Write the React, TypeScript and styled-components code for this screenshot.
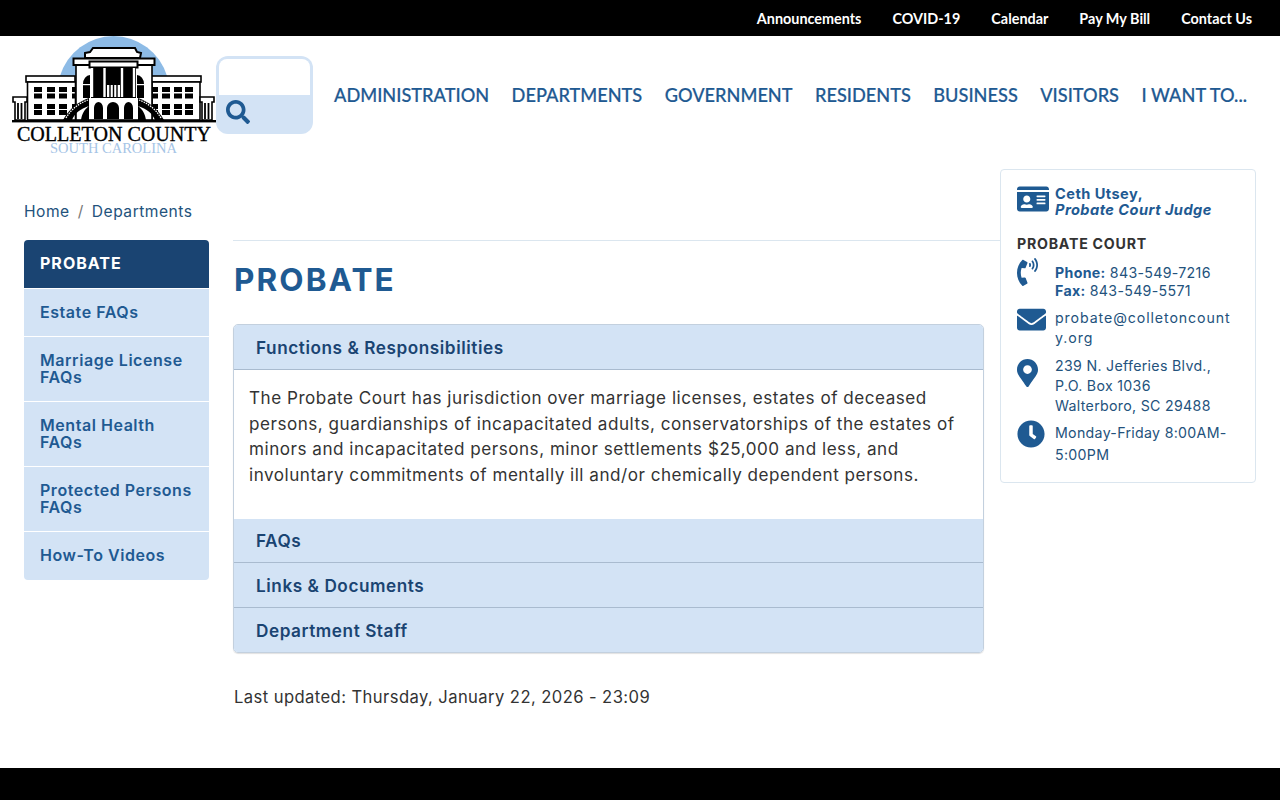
import React from 'react';
import styled, { createGlobalStyle } from 'styled-components';
import { FaClock, FaEnvelope, FaIdCard, FaMapMarkerAlt, FaPhoneVolume, FaSearch } from 'react-icons/fa';

const colors = {
  navy: '#1a4472',
  blue: '#1f5a92',
  link: '#23527c',
  pale: '#d3e3f5',
  text: '#333333',
  rule: '#dbe6ef',
};

const bodyFont = '"Inter", "Open Sans", sans-serif';
const navFont = '"Lato", "Open Sans", sans-serif';

const GlobalStyle = createGlobalStyle`
  html, body { margin: 0; padding: 0; background: #fff; }
  body { font-family: ${bodyFont}; color: ${colors.text}; }
  * { box-sizing: border-box; }
  a { color: inherit; text-decoration: none; }
`;

const Page = styled.div`
  display: flex;
  flex-direction: column;
  height: 800px;
  overflow: hidden;
`;

const TopBar = styled.div`
  display: flex;
  justify-content: flex-end;
  align-items: center;
  gap: 31px;
  height: 36px;
  padding-right: 28px;
  background: #000;
`;

const TopLink = styled.a`
  font-family: ${navFont};
  font-size: 14.4px;
  font-weight: 700;
  color: #fff;
`;

const Header = styled.header`
  display: flex;
  align-items: flex-start;
  height: 124px;
  padding-left: 12px;
`;

const Logo = styled.svg`
  display: block;
  flex: none;
  width: 204px;
  height: 120px;
`;

const SearchBox = styled.div`
  flex: none;
  width: 97px;
  height: 78px;
  margin-top: 20px;
  padding: 3px;
  background: ${colors.pale};
  border-radius: 12px;
  color: ${colors.blue};
  svg {
    display: block;
    width: 24px;
    height: 24px;
    margin: 5px 0 0 7px;
  }
`;

const SearchInput = styled.div`
  height: 36px;
  background: #fff;
  border-radius: 8px 8px 0 0;
`;

const Nav = styled.nav`
  display: flex;
  justify-content: space-between;
  width: 913px;
  margin: 48px 0 0 21px;
`;

const NavLink = styled.a`
  font-family: ${navFont};
  font-size: 18.2px;
  font-weight: 500;
  line-height: 23px;
  color: ${colors.blue};
  -webkit-text-stroke: 0.2px ${colors.blue};
  white-space: nowrap;
`;

const Main = styled.main`
  flex: 1;
  display: grid;
  grid-template-columns: 185px 767px 256px;
  column-gap: 24px;
  padding-left: 24px;
`;

const LeftColumn = styled.aside`
  padding-top: 43px;
`;

const Breadcrumb = styled.div`
  display: flex;
  gap: 8px;
  height: 37px;
  font-size: 15.6px;
  line-height: 18px;
  letter-spacing: 0.5px;
  color: ${colors.link};
  span { color: #777; }
`;

const SideMenu = styled.ul`
  margin: 0;
  padding: 0;
  list-style: none;
  border-radius: 4px;
  overflow: hidden;
`;

const SideItem = styled.li<{ $active?: boolean }>`
  padding: ${p => (p.$active ? '15.3px' : '14.6px')} 16px 16px;
  font-size: 16px;
  line-height: 16.7px;
  letter-spacing: ${p => (p.$active ? 1 : 0.55)}px;
  font-weight: ${p => (p.$active ? 700 : 600)};
  color: ${p => (p.$active ? '#fff' : colors.blue)};
  background: ${p => (p.$active ? colors.navy : colors.pale)};
  & + & { border-top: 1px solid #fff; }
`;

const Content = styled.section`
  padding-top: 80px;
`;

const TitleBlock = styled.div`
  width: 767px;
  border-top: 1px solid ${colors.rule};
`;

const Title = styled.h1`
  margin: 0;
  padding: 20px 0 0 1px;
  height: 83px;
  font-size: 31.5px;
  line-height: 38px;
  letter-spacing: 2.1px;
  font-weight: 700;
  color: ${colors.blue};
`;

const Accordion = styled.div`
  width: 751px;
  border: 1px solid #c3d0de;
  border-radius: 5px;
  overflow: hidden;
  box-shadow: 0 1px 1px rgba(0, 0, 0, 0.12);
`;

const AccordionHead = styled.div<{ $h: number }>`
  display: flex;
  align-items: center;
  height: ${p => p.$h}px;
  padding-left: 22px;
  font-size: 17.2px;
  letter-spacing: 0.55px;
  font-weight: 600;
  color: ${colors.navy};
  background: ${colors.pale};
  & + & { border-top: 1px solid #a9bbcf; }
`;

const AccordionBody = styled.div`
  height: 150px;
  padding: 15px 15px 0;
  border-top: 1px solid #a9bbcf;
  font-size: 17.1px;
  line-height: 25.7px;
  letter-spacing: 0.51px;
  color: ${colors.text};
`;

const Updated = styled.p`
  margin: 34px 0 0 1px;
  font-size: 16.6px;
  line-height: 20px;
  letter-spacing: 0.42px;
  color: ${colors.text};
`;

const InfoCard = styled.div`
  align-self: start;
  width: 256px;
  height: 314px;
  margin: 9px 0 0 -24px;
  padding: 16px 24px 0 16px;
  border: 1px solid ${colors.rule};
  border-radius: 4px;
  background: #fff;
  font-size: 14.2px;
  letter-spacing: 0.3px;
  color: ${colors.link};
`;

const InfoRow = styled.div<{ $top?: number }>`
  display: flex;
  margin-top: ${p => p.$top ?? 0}px;
`;

const IconSlot = styled.div<{ $w: number; $h: number; $shift?: number }>`
  flex: none;
  width: 38px;
  height: 0;
  margin-top: ${p => p.$shift ?? 0}px;
  color: ${colors.blue};
  svg {
    display: block;
    width: ${p => p.$w}px;
    height: ${p => p.$h}px;
  }
`;

const Person = styled.div`
  font-size: 14.6px;
  line-height: 16px;
  letter-spacing: 0.45px;
  font-weight: 700;
  color: ${colors.blue};
  em { display: block; }
`;

const CourtName = styled.div`
  margin-top: 17px;
  font-size: 14.2px;
  line-height: 17px;
  letter-spacing: 0.75px;
  font-weight: 700;
  color: ${colors.text};
`;

const Lines = styled.div<{ $lh: number; $pad?: number }>`
  min-width: 0;
  padding-top: ${p => p.$pad ?? 0}px;
  line-height: ${p => p.$lh}px;
  b { font-weight: 700; color: ${colors.blue}; }
`;

const EmailLines = styled(Lines)`
  letter-spacing: 0.9px;
  word-break: break-all;
`;

const Footer = styled.footer`
  flex: none;
  height: 32px;
  background: #000;
`;

const topLinks = ['Announcements', 'COVID-19', 'Calendar', 'Pay My Bill', 'Contact Us'];
const navLinks = ['ADMINISTRATION', 'DEPARTMENTS', 'GOVERNMENT', 'RESIDENTS', 'BUSINESS', 'VISITORS', 'I WANT TO...'];
const sideLinks = ['Estate FAQs', 'Marriage License FAQs', 'Mental Health FAQs', 'Protected Persons FAQs', 'How-To Videos'];

// two floors of paired window panes on one courthouse wing
const Windows: React.FC<{ xs: number[] }> = ({ xs }) => (
  <g fill="#000">
    {xs.map(x =>
      [87, 93.5, 104, 110].map(y => <rect key={`${x}-${y}`} x={x} y={y} width={8} height={5} />)
    )}
  </g>
);

const CountyLogo: React.FC = () => (
  <Logo viewBox="12 36 204 120">
    <path d="M60 76 A55.8 55.8 0 0 1 167 76 Z" fill="#8dbbe6" />
    {/* wings */}
    <rect x="26" y="76" width="49" height="6" fill="#fff" stroke="#000" strokeWidth="1.6" />
    <rect x="27.5" y="82" width="48" height="38" fill="#fff" stroke="#000" strokeWidth="1.6" />
    <rect x="150" y="76" width="51" height="6" fill="#fff" stroke="#000" strokeWidth="1.6" />
    <rect x="152" y="82" width="48" height="38" fill="#fff" stroke="#000" strokeWidth="1.6" />
    <Windows xs={[34, 47, 59, 72]} />
    <Windows xs={[150, 162, 174, 185]} />
    {/* end pavilions */}
    <path d="M13 97 H27 V102 H25 V120 H15 V102 H13 Z" fill="#fff" stroke="#000" strokeWidth="1.6" />
    <path d="M18 103 V119 M21.5 103 V119" stroke="#000" strokeWidth="1.8" />
    <path d="M214 97 H200 V102 H202 V120 H212 V102 H214 Z" fill="#fff" stroke="#000" strokeWidth="1.6" />
    <path d="M205 103 V119 M208.5 103 V119" stroke="#000" strokeWidth="1.8" />
    {/* roof and central block */}
    <path d="M85 53 L90 52 L93 48 L135 48 L137 52 L141 53 L140 58 L85 58 Z" fill="#fff" stroke="#000" strokeWidth="2" />
    <rect x="76" y="64" width="76" height="56" fill="#fff" stroke="#000" strokeWidth="1.6" />
    <rect x="73.5" y="58.5" width="81" height="6.5" fill="#fff" stroke="#000" strokeWidth="2" />
    {/* portico */}
    <rect x="89.5" y="61.5" width="48" height="6" fill="#fff" stroke="#000" strokeWidth="2" />
    <rect x="91" y="67" width="45" height="31" fill="#000" />
    <path d="M92 68 V97 M104.5 68 V97 M122 68 V97 M134 68 V97" stroke="#fff" strokeWidth="2.4" />
    <rect x="107" y="85" width="13" height="12" fill="#fff" />
    <path d="M110 85 V97 M113.5 85 V97 M117 85 V97" stroke="#000" strokeWidth="1.4" />
    <path d="M83 84 A7 9 0 0 1 90 75 V98 H83 Z M137 75 A7 9 0 0 1 144 84 V98 H137 Z" fill="#000" />
    <rect x="83" y="84" width="7" height="1.2" fill="#fff" />
    <rect x="137" y="84" width="7" height="1.2" fill="#fff" />
    {/* arches */}
    <path d="M94 119 V108 A4.5 6 0 0 1 103 108 V119 Z M107 119 V108 A6 6 0 0 1 119 108 V119 Z M124 119 V108 A4.5 6 0 0 1 133 108 V119 Z" fill="#000" />
    {/* stairs */}
    <path d="M63 120 C70 108 78 102 89 98 V120 H81 C82 114 84 110 89 106 C80 109 75 113 72 120 Z" fill="#000" />
    <path d="M66 118 C72 108 80 103 88 100" fill="none" stroke="#fff" strokeWidth="1.2" strokeDasharray="1.5 1" />
    <path d="M164 120 C157 108 149 102 138 98 V120 H146 C145 114 143 110 138 106 C147 109 152 113 155 120 Z" fill="#000" />
    <path d="M161 118 C155 108 147 103 139 100" fill="none" stroke="#fff" strokeWidth="1.2" strokeDasharray="1.5 1" />
    <rect x="12" y="120" width="204" height="2.4" fill="#000" />
    <text x="114" y="140.5" textAnchor="middle" fontFamily="'Liberation Serif', serif" fontSize="20.5" textLength="194" lengthAdjust="spacingAndGlyphs" fill="#000" stroke="#000" strokeWidth="0.35">COLLETON COUNTY</text>
    <text x="113.5" y="153" textAnchor="middle" fontFamily="'Liberation Serif', serif" fontSize="14.5" textLength="127" lengthAdjust="spacingAndGlyphs" fill="#a5c4e6">SOUTH CAROLINA</text>
  </Logo>
);

export default function App() {
  return (
    <Page>
      <GlobalStyle />
      <TopBar>
        {topLinks.map(l => (
          <TopLink key={l} href="#">{l}</TopLink>
        ))}
      </TopBar>
      <Header>
        <CountyLogo />
        <SearchBox>
          <SearchInput />
          <FaSearch />
        </SearchBox>
        <Nav>
          {navLinks.map(l => (
            <NavLink key={l} href="#">{l}</NavLink>
          ))}
        </Nav>
      </Header>
      <Main>
        <LeftColumn>
          <Breadcrumb>
            <a href="#">Home</a>
            <span>/</span>
            <a href="#">Departments</a>
          </Breadcrumb>
          <SideMenu>
            <SideItem $active>PROBATE</SideItem>
            {sideLinks.map(l => (
              <SideItem key={l}>{l}</SideItem>
            ))}
          </SideMenu>
        </LeftColumn>
        <Content>
          <TitleBlock>
            <Title>PROBATE</Title>
          </TitleBlock>
          <Accordion>
            <AccordionHead $h={44}>Functions &amp; Responsibilities</AccordionHead>
            <AccordionBody>
              The Probate Court has jurisdiction over marriage licenses, estates of deceased persons, guardianships of
              incapacitated adults, conservatorships of the estates of minors and incapacitated persons, minor
              settlements $25,000 and less, and involuntary commitments of mentally ill and/or chemically dependent
              persons.
            </AccordionBody>
            <AccordionHead $h={43}>FAQs</AccordionHead>
            <AccordionHead $h={45}>Links &amp; Documents</AccordionHead>
            <AccordionHead $h={45}>Department Staff</AccordionHead>
          </Accordion>
          <Updated>Last updated: Thursday, January 22, 2026 - 23:09</Updated>
        </Content>
        <InfoCard>
          <InfoRow>
            <IconSlot $w={32} $h={32} $shift={-3}><FaIdCard /></IconSlot>
            <Person>
              Ceth Utsey,
              <em>Probate Court Judge</em>
            </Person>
          </InfoRow>
          <CourtName>PROBATE COURT</CourtName>
          <InfoRow $top={3}>
            <IconSlot $w={21} $h={28} $shift={3}><FaPhoneVolume /></IconSlot>
            <Lines $lh={18} $pad={9}>
              <b>Phone:</b> 843-549-7216
              <br />
              <b>Fax:</b> 843-549-5571
            </Lines>
          </InfoRow>
          <InfoRow $top={8}>
            <IconSlot $w={29} $h={29} $shift={-3}><FaEnvelope /></IconSlot>
            <EmailLines $lh={20}>probate@colletoncounty.org</EmailLines>
          </InfoRow>
          <InfoRow $top={8}>
            <IconSlot $w={21} $h={28} $shift={3}><FaMapMarkerAlt /></IconSlot>
            <Lines $lh={20}>
              239 N. Jefferies Blvd.,
              <br />
              P.O. Box 1036
              <br />
              Walterboro, SC 29488
            </Lines>
          </InfoRow>
          <InfoRow $top={6}>
            <IconSlot $w={28} $h={28} $shift={-2}><FaClock /></IconSlot>
            <Lines $lh={22}>Monday-Friday 8:00AM-5:00PM</Lines>
          </InfoRow>
        </InfoCard>
      </Main>
      <Footer />
    </Page>
  );
}
